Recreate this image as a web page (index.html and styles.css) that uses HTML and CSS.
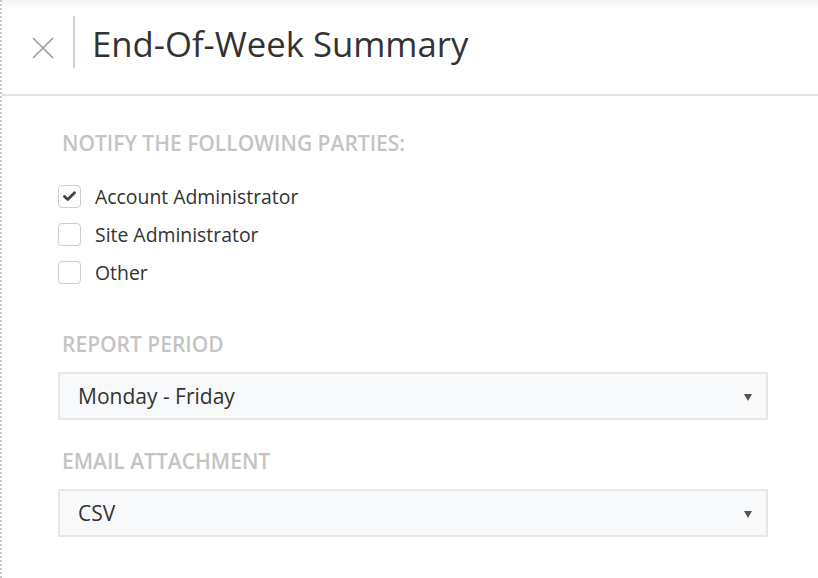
FILE: index.html
```html
<!DOCTYPE html>
<html>
<head>
<meta charset="utf-8">
<link rel="stylesheet" href="styles.css">
</head>
<body>
<div class="panel">
  <div class="topshade"></div>
  <header class="header">
    <button class="close" aria-label="Close">
      <svg width="22" height="22" viewBox="0 0 22 22"><path d="M1 1L21 21M21 1L1 21" stroke="#9a9a9a" stroke-width="1.6" fill="none"/></svg>
    </button>
    <div class="divider"></div>
    <h1 class="title">End-Of-Week Summary</h1>
  </header>
  <main class="content">
    <div class="section-label">NOTIFY THE FOLLOWING PARTIES:</div>
    <div class="checks">
      <label class="check">
        <span class="box checked">
          <svg width="13" height="11" viewBox="0 0 13 11"><path d="M1.5 5.5L4.8 8.6L11.5 1.8" stroke="#444" stroke-width="2.8" fill="none" stroke-linecap="round" stroke-linejoin="round"/></svg>
        </span>
        <span class="check-text">Account Administrator</span>
      </label>
      <label class="check">
        <span class="box"></span>
        <span class="check-text">Site Administrator</span>
      </label>
      <label class="check">
        <span class="box"></span>
        <span class="check-text">Other</span>
      </label>
    </div>
    <div class="section-label period">REPORT PERIOD</div>
    <div class="select">
      <span class="select-value">Monday - Friday</span>
      <span class="caret"></span>
    </div>
    <div class="section-label attach">EMAIL ATTACHMENT</div>
    <div class="select">
      <span class="select-value">CSV</span>
      <span class="caret"></span>
    </div>
  </main>
</div>
</body>
</html>
```
FILE: styles.css
```css
html, body {
  margin: 0;
  padding: 0;
  background: #fff;
}
body {
  font-family: "Open Sans", "Liberation Sans", sans-serif;
  color: #333;
  width: 818px;
  height: 578px;
  overflow: hidden;
}
.panel {
  position: relative;
  height: 578px;
  border-left: 2px dotted #c8c8c8;
  box-sizing: border-box;
}
.topshade {
  position: absolute;
  left: 0;
  right: 0;
  top: 0;
  height: 10px;
  background: linear-gradient(#f3f3f3, rgba(255,255,255,0));
}
.header {
  height: 94px;
  border-bottom: 2px solid #e4e4e4;
  display: flex;
  align-items: center;
  box-sizing: content-box;
}
.close {
  border: 0;
  background: none;
  padding: 0;
  margin-left: 30px;
  width: 22px;
  height: 22px;
  margin-top: 2px;
  display: flex;
}
.divider {
  width: 2px;
  height: 52px;
  background: #cfcfcf;
  margin-left: 19px;
  margin-top: -10px;
}
.title {
  margin: 0 0 0 17px;
  font-weight: 400;
  font-size: 34.7px;
  color: #333;
  letter-spacing: 0;
  margin-top: -8px;
}
.content {
  padding: 35px 50px 0 56px;
}
.section-label {
  padding-left: 4px;
  font-size: 21px;
  font-weight: 600;
  color: #c4c4c4;
  line-height: 24px;
}
.checks {
  margin-top: 30px;
  display: flex;
  flex-direction: column;
  gap: 15px;
}
.check {
  display: flex;
  align-items: center;
  height: 23px;
}
.box {
  width: 21px;
  height: 21px;
  border: 1px solid #cdcdcd;
  border-radius: 4px;
  display: flex;
  align-items: center;
  justify-content: center;
  background: #fff;
}
.check-text {
  margin-left: 14px;
  font-size: 19.4px;
  color: #333;
}
.section-label.period {
  margin-top: 48px;
}
.section-label.attach {
  margin-top: 29px;
}
.select {
  margin-top: 16px;
  height: 44px;
  border: 2px solid #e7e7e7;
  background: #f8f9fa;
  display: flex;
  align-items: center;
  justify-content: space-between;
  padding: 0 14px 0 18px;
}
.select-value {
  font-size: 21px;
  color: #333;
}
.caret {
  width: 0;
  height: 0;
  border-left: 4px solid transparent;
  border-right: 4px solid transparent;
  border-top: 7px solid #555;
  margin-top: 2px;
}
```
